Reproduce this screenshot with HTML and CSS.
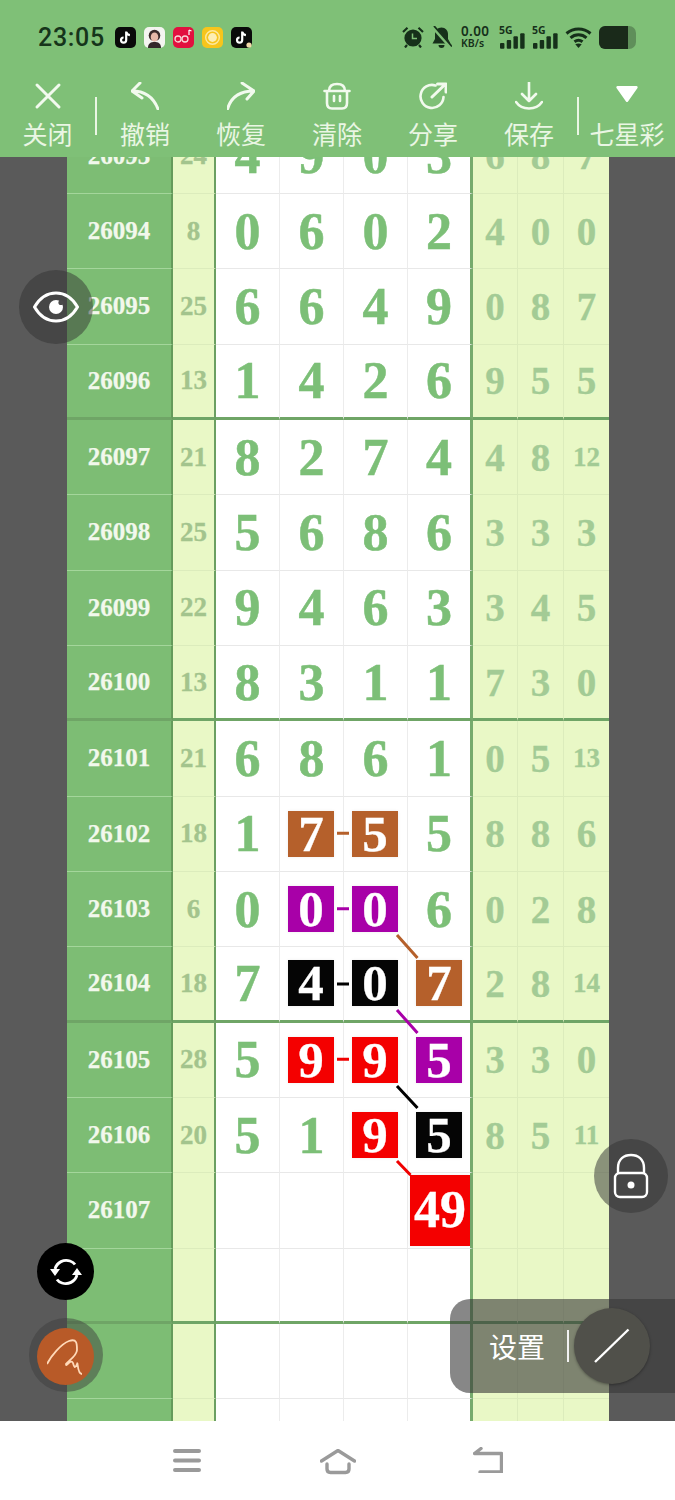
FILE: index.html
```html
<!DOCTYPE html>
<html lang="zh">
<head>
<meta charset="utf-8">
<title>七星彩</title>
<link rel="stylesheet" href="styles.css">
</head>
<body>
<div class="app">
  <header class="head">
    <div class="status">
      <div class="status-left">
        <span class="time">23:05</span>
        <svg class="app-icon" viewBox="0 0 21 21"><rect width="21" height="21" rx="5" fill="#0a0a0a"/><path d="M11.2 4.5v8.6a2.6 2.6 0 1 1-2.6-2.6M11.2 4.8c.4 2 1.7 3.2 3.7 3.4" fill="none" stroke="#fff" stroke-width="2.2"/></svg>
        <svg class="app-icon" viewBox="0 0 21 21"><rect width="21" height="21" rx="5" fill="#f4f4f0"/><path d="M4 21c0-5 3-6 6.500-6s6.500 1 6.500 6z" fill="#33282a"/><circle cx="10.500" cy="8.500" r="5.800" fill="#3b2a2a"/><ellipse cx="10.500" cy="10" rx="3.800" ry="4.600" fill="#e8b8a8"/></svg>
        <svg class="app-icon" viewBox="0 0 21 21"><rect width="21" height="21" rx="5" fill="#e2103f"/><rect x="2" y="9" width="6" height="6" rx="3" fill="none" stroke="#f8d8d8" stroke-width="1.300"/><rect x="9" y="9" width="6" height="6" rx="3" fill="none" stroke="#f8d8d8" stroke-width="1.300"/><path d="M16 3v5M16 3l2.500 1" stroke="#fff" stroke-width="1.200" fill="none"/></svg>
        <svg class="app-icon" viewBox="0 0 21 21"><rect width="21" height="21" rx="5" fill="#f7c51c"/><circle cx="10.500" cy="10.500" r="6.800" fill="none" stroke="#fde9a0" stroke-width="1.400"/><circle cx="10.500" cy="10.500" r="4.400" fill="#fdeeb4"/></svg>
        <svg class="app-icon" viewBox="0 0 21 21"><rect width="21" height="21" rx="5" fill="#0a0a0a"/><path d="M11.200 4.500v8.600a2.600 2.600 0 1 1-2.600-2.600M11.200 4.800c.4 2 1.700 3.200 3.700 3.400" fill="none" stroke="#fff" stroke-width="2.200"/><circle cx="18" cy="18" r="2.600" fill="#f2d9a8"/></svg>
      </div>
      <div class="status-right">
        <svg class="s-alarm" viewBox="0 0 22 22"><circle cx="11" cy="12" r="8.600" fill="#16301a"/><path d="M10.500 7.500V12.500H15" fill="none" stroke="#7fc077" stroke-width="1.500"/><path d="M1 6 5.500 1.800M21 6 16.500 1.800M5 19l-2 2.500M17 19l2 2.500" stroke="#16301a" stroke-width="2.200"/></svg>
        <svg class="s-bell" viewBox="0 0 21 22"><path d="M10.500 1.500c-4 0-6.500 3-6.500 6.500v5L1.500 17.500h18L17 13V8c0-3.500-2.500-6.500-6.500-6.500zM7.500 19a3 3 0 0 0 6 0z" fill="#16301a"/><path d="M1.500 .5 20 21.500" stroke="#7fc077" stroke-width="3.600"/><path d="M3 0 21 20.500" stroke="#16301a" stroke-width="1.800"/></svg>
        <div class="speed"><span class="speed-num">0.00</span><span class="speed-unit">KB/s</span></div>
        <div class="signal"><span class="five-g">5G</span>
          <svg class="bars" viewBox="0 0 26 16"><rect x="0" y="10" width="4.600" height="6" rx="1"/><rect x="7" y="7" width="4.600" height="9" rx="1"/><rect x="14" y="3" width="4.600" height="13" rx="1"/><rect x="21" y="0" width="4.600" height="16" rx="1"/></svg>
        </div>
        <div class="signal"><span class="five-g">5G</span>
          <svg class="bars" viewBox="0 0 26 16"><rect x="0" y="10" width="4.600" height="6" rx="1"/><rect x="7" y="7" width="4.600" height="9" rx="1"/><rect x="14" y="3" width="4.600" height="13" rx="1"/><rect x="21" y="0" width="4.600" height="16" rx="1"/></svg>
        </div>
        <svg class="s-wifi" viewBox="0 0 27 22"><path d="M1.500 7.500c7-6 17-6 24 0M5.500 11.800c4.600-4 11.400-4 16 0M9.500 15.800c2.400-1.900 5.600-1.900 8 0" fill="none" stroke="#16301a" stroke-width="3"/><path d="M13.500 22 10.300 18.300c1.800-1.100 4.600-1.100 6.400 0z" fill="#16301a"/></svg>
        <svg class="s-batt" viewBox="0 0 38 23"><rect x="0" y="0" width="37" height="23" rx="7" fill="#5f8f5a"/><path d="M6 0H29V23H6a6 6 0 0 1-6-6V6a6 6 0 0 1 6-6z" fill="#1a2a1a"/></svg>
      </div>
    </div>
    <nav class="toolbar">
      <div class="tool tool-first">
        <svg class="tool-icon" viewBox="0 0 28 28"><path d="M3 3 25 25M25 3 3 25" class="ti"/></svg>
        <span class="tool-label">关闭</span>
      </div>
      <span class="tool-sep"></span>
      <div class="tool">
        <svg class="tool-icon" viewBox="0 0 28 28"><path d="M9 1 1 9 11 16M1 9C12 9 22 14 27 27" class="ti"/></svg>
        <span class="tool-label">撤销</span>
      </div>
      <div class="tool">
        <svg class="tool-icon" viewBox="0 0 28 28"><path d="M15 1 27 9 20 17M.5 27C4 15 13 9 27 9" class="ti"/></svg>
        <span class="tool-label">恢复</span>
      </div>
      <div class="tool">
        <svg class="tool-icon" viewBox="0 0 28 28"><path d="M6 9C6 4 9 2 14 2s8 2 8 7M1.500 9H26.500M4 9V21c0 4 2 5.500 5 5.500h10c3 0 5-1.500 5-5.500V9M11 14v5M17 14v5" class="ti ti-thin"/></svg>
        <span class="tool-label">清除</span>
      </div>
      <div class="tool">
        <svg class="tool-icon" viewBox="0 0 28 28"><path d="M16.500 3.500A11.500 11.500 0 1 0 24.500 15" class="ti ti-thin"/><path d="M13 15 26 2.500M18.500 2H27V10" class="ti"/></svg>
        <span class="tool-label">分享</span>
      </div>
      <div class="tool">
        <svg class="tool-icon" viewBox="0 0 28 28"><path d="M14 0V19M7 12 14 19 21 12M1 20c3 4.500 8 6.500 13 6.500s10-2 13-6.500" class="ti ti-thin"/></svg>
        <span class="tool-label">保存</span>
      </div>
      <span class="tool-sep"></span>
      <div class="tool">
        <svg class="tool-icon" viewBox="0 0 28 28"><path d="M4.500 4h19c1 0 1.500 1 1 2L15 19.500c-.5.800-1.500.800-2 0L3.500 6c-.5-1 0-2 1-2z" fill="#fff"/></svg>
        <span class="tool-label">七星彩</span>
      </div>
    </nav>
  </header>

  <main class="stage">
    <div class="sheet">
      <div class="row"><div class="id">26093</div><div class="sum">24</div><div class="n">4</div><div class="n">9</div><div class="n">0</div><div class="n n4">3</div><div class="r">6</div><div class="r">8</div><div class="r">7</div></div>
      <div class="row"><div class="id">26094</div><div class="sum">8</div><div class="n">0</div><div class="n">6</div><div class="n">0</div><div class="n n4">2</div><div class="r">4</div><div class="r">0</div><div class="r">0</div></div>
      <div class="row"><div class="id">26095</div><div class="sum">25</div><div class="n">6</div><div class="n">6</div><div class="n">4</div><div class="n n4">9</div><div class="r">0</div><div class="r">8</div><div class="r">7</div></div>
      <div class="row end"><div class="id">26096</div><div class="sum">13</div><div class="n">1</div><div class="n">4</div><div class="n">2</div><div class="n n4">6</div><div class="r">9</div><div class="r">5</div><div class="r">5</div></div>
      <div class="row"><div class="id">26097</div><div class="sum">21</div><div class="n">8</div><div class="n">2</div><div class="n">7</div><div class="n n4">4</div><div class="r">4</div><div class="r">8</div><div class="r small">12</div></div>
      <div class="row"><div class="id">26098</div><div class="sum">25</div><div class="n">5</div><div class="n">6</div><div class="n">8</div><div class="n n4">6</div><div class="r">3</div><div class="r">3</div><div class="r">3</div></div>
      <div class="row"><div class="id">26099</div><div class="sum">22</div><div class="n">9</div><div class="n">4</div><div class="n">6</div><div class="n n4">3</div><div class="r">3</div><div class="r">4</div><div class="r">5</div></div>
      <div class="row end"><div class="id">26100</div><div class="sum">13</div><div class="n">8</div><div class="n">3</div><div class="n">1</div><div class="n n4">1</div><div class="r">7</div><div class="r">3</div><div class="r">0</div></div>
      <div class="row"><div class="id">26101</div><div class="sum">21</div><div class="n">6</div><div class="n">8</div><div class="n">6</div><div class="n n4">1</div><div class="r">0</div><div class="r">5</div><div class="r small">13</div></div>
      <div class="row"><div class="id">26102</div><div class="sum">18</div><div class="n">1</div><div class="n"><span class="box brown">7</span></div><div class="n"><span class="box brown">5</span></div><div class="n n4">5</div><div class="r">8</div><div class="r">8</div><div class="r">6</div></div>
      <div class="row"><div class="id">26103</div><div class="sum">6</div><div class="n">0</div><div class="n"><span class="box purple">0</span></div><div class="n"><span class="box purple">0</span></div><div class="n n4">6</div><div class="r">0</div><div class="r">2</div><div class="r">8</div></div>
      <div class="row end"><div class="id">26104</div><div class="sum">18</div><div class="n">7</div><div class="n"><span class="box black">4</span></div><div class="n"><span class="box black">0</span></div><div class="n n4"><span class="box brown">7</span></div><div class="r">2</div><div class="r">8</div><div class="r small">14</div></div>
      <div class="row"><div class="id">26105</div><div class="sum">28</div><div class="n">5</div><div class="n"><span class="box red">9</span></div><div class="n"><span class="box red">9</span></div><div class="n n4"><span class="box purple">5</span></div><div class="r">3</div><div class="r">3</div><div class="r">0</div></div>
      <div class="row"><div class="id">26106</div><div class="sum">20</div><div class="n">5</div><div class="n">1</div><div class="n"><span class="box red">9</span></div><div class="n n4"><span class="box black">5</span></div><div class="r">8</div><div class="r">5</div><div class="r small">11</div></div>
      <div class="row"><div class="id">26107</div><div class="sum"></div><div class="n"></div><div class="n"></div><div class="n"></div><div class="n n4"><span class="box red total">49</span></div><div class="r"></div><div class="r"></div><div class="r"></div></div>
      <div class="row end"><div class="id"></div><div class="sum"></div><div class="n"></div><div class="n"></div><div class="n"></div><div class="n n4"></div><div class="r"></div><div class="r"></div><div class="r"></div></div>
      <div class="row"><div class="id"></div><div class="sum"></div><div class="n"></div><div class="n"></div><div class="n"></div><div class="n n4"></div><div class="r"></div><div class="r"></div><div class="r"></div></div>
      <div class="row"><div class="id"></div><div class="sum"></div><div class="n"></div><div class="n"></div><div class="n"></div><div class="n n4"></div><div class="r"></div><div class="r"></div><div class="r"></div></div>
    </div>
  </main>

  <footer class="navbar">
    <svg class="nav-menu" viewBox="0 0 28 24"><path d="M2 3H26M2 12.500H26M2 22H26" class="nv"/></svg>
    <svg class="nav-home" viewBox="0 0 36 26"><path d="M1.500 12 18 1.500 34.500 12M7 15V20c0 2.500 1.500 3.500 3.500 3.500h15c2 0 3.500-1 3.500-3.500V15" class="nv nv-thin"/></svg>
    <svg class="nav-back" viewBox="0 0 30 26"><path d="M8 1.500 1.500 6.500H28.500V25H7" class="nv nv-thin"/></svg>
  </footer>

  <svg class="links" viewBox="0 0 675 1500">
    <path d="M337 833.300H349M397 935 417.500 958" stroke="#b5602b"/>
    <path d="M337 908.700H349M397 1010 417.500 1033" stroke="#a800a8"/>
    <path d="M337 984H349M397 1086 417.500 1108" stroke="#000"/>
    <path d="M337 1059.300H349M397 1161 410.500 1175" stroke="#f00000"/>
  </svg>

  <div class="float eye">
    <svg viewBox="0 0 46 32"><path d="M1.500 16C7 6.500 15 2 23 2s16 4.500 21.500 14C39 25.500 31 30 23 30S7 25.500 1.500 16z" fill="none" stroke="#fff" stroke-width="3"/><circle cx="23" cy="16" r="7" fill="#fff"/><circle cx="28" cy="11.500" r="2.600" fill="#4a4a4a"/></svg>
  </div>
  <div class="float lock">
    <svg viewBox="0 0 36 46"><path d="M5 20V15C5 6 11 2 18 2s13 4 13 13v5" fill="none" stroke="#fff" stroke-width="2.400"/><rect x="2" y="20" width="32" height="24" rx="5" fill="none" stroke="#fff" stroke-width="2.400"/><circle cx="18" cy="32" r="3.500" fill="#fff"/></svg>
  </div>
  <div class="float sync">
    <svg viewBox="0 0 32 32"><path d="M5 13C7 6 14 3 20 5c2 .7 4 2 5 3.500M27 19c-2 7-9 10-15 8-2-.7-4-2-5-3.500" fill="none" stroke="#fff" stroke-width="2.800"/><path d="M0 13H10L5 20zM32 19H22L27 12z" fill="#fff"/></svg>
  </div>
  <div class="float pen">
    <span class="pen-dot">
      <svg viewBox="0 0 36 40"><path d="M0 28C4 20 14 8 22 5 30 2 30 8 30 14 30 20 20 26 19 28 19 32 24 22 26 27 27 31 28 33 30 28 31 24 30 38 35 38" fill="none" stroke="#ffd9b8" stroke-width="1.800"/></svg>
    </span>
  </div>
  <div class="panel">
    <span class="panel-text">设置</span>
    <span class="panel-sep"></span>
    <span class="panel-btn">
      <svg viewBox="0 0 36 36"><path d="M1 34 34.500 1.500" stroke="#fff" stroke-width="2.400"/></svg>
    </span>
  </div>
</div>
</body>
</html>
```

FILE: styles.css
```css
* { box-sizing: border-box; }
html, body { margin: 0; padding: 0; }
body { width: 675px; height: 1500px; overflow: hidden; background: #fff; }

.app {
  position: relative;
  width: 675px;
  height: 1500px;
  display: flex;
  flex-direction: column;
  overflow: hidden;
  font-family: "Noto Sans CJK SC", "Noto Sans", sans-serif;
}

/* header */
.head { background: #7fc077; height: 157px; flex: none; position: relative; z-index: 2; }
.status {
  height: 74px;
  display: flex;
  align-items: center;
  justify-content: space-between;
  padding: 0 38px;
  color: #16301a;
}
.status-left, .status-right { display: flex; align-items: center; }
.status-left { gap: 8px; }
.status-right { gap: 7px; }
.time {
  font-family: Roboto, sans-serif;
  font-size: 25px;
  font-weight: 500;
  letter-spacing: .7px;
  width: 69px;
  color: #16351b;
}
.app-icon { width: 21px; height: 21px; }
.s-alarm { width: 22px; height: 22px; }
.s-bell { width: 21px; height: 22px; }
.speed {
  width: 33px;
  padding-left: 2px;
  display: flex;
  flex-direction: column;
  font-family: "Noto Sans", sans-serif;
  font-weight: 600;
  line-height: 12px;
}
.speed-num { font-size: 13.500px; letter-spacing: .4px; }
.speed-unit { font-size: 10.500px; }
.signal { width: 26px; height: 23px; position: relative; }
.five-g {
  position: absolute;
  left: 0;
  top: -1px;
  font-family: "Noto Sans", sans-serif;
  font-size: 10.500px;
  font-weight: 700;
  line-height: 11px;
}
.bars { position: absolute; left: 1px; bottom: 0; width: 25px; height: 16px; fill: #16301a; }
.s-wifi { width: 27px; height: 22px; }
.s-batt { width: 38px; height: 23px; }

.toolbar { display: flex; height: 83px; align-items: flex-start; }
.tool {
  width: 96px;
  flex: none;
  display: flex;
  flex-direction: column;
  align-items: center;
  padding-top: 8px;
}
.tool-first { width: 95px; }
.tool-icon { width: 28px; height: 28px; display: block; }
.ti { fill: none; stroke: #f2faee; stroke-width: 3; stroke-linecap: round; stroke-linejoin: round; }
.ti-thin { stroke-width: 2.600; }
.tool-label {
  margin-top: 7px;
  font-size: 25px;
  line-height: 32px;
  color: #eaf6e4;
  white-space: nowrap;
}
.tool-sep { width: 2px; height: 38px; margin-top: 23px; flex: none; background: #eaf6e4; }

/* table */
.stage { height: 1264px; flex: none; overflow: hidden; background: #5a5a5a; }
.sheet { margin: -38.400px 0 0 67px; width: 542px; font-family: "Liberation Serif", serif; font-weight: 700; }
.row {
  display: grid;
  grid-template-columns: 106px 43px 64px 64px 64px 65px 45px 46px 45px;
  height: 75.330px;
}
.row > div {
  display: flex;
  align-items: center;
  justify-content: center;
  border-bottom: 1px solid transparent;
  min-width: 0;
}
.id {
  background: #7dbd74;
  color: #f2f8ec;
  font-size: 25px;
  -webkit-text-stroke: .25px #f2f8ec;
  border-right: 2px solid #659b5b;
  border-bottom-color: #a4d69b !important;
}
.sum {
  background: #e9f8c6;
  color: #a3c48d;
  font-size: 27px;
  -webkit-text-stroke: .3px #a3c48d;
  border-right: 2px solid #6b9f62;
  border-bottom-color: #dcecbc !important;
}
.n {
  background: #fff;
  color: #7cbf77;
  font-size: 52px;
  -webkit-text-stroke: .5px #7cbf77;
  border-right: 1px solid #ececec;
  border-bottom-color: #e8e8e8 !important;
}
.n4 { border-right: 3px solid #76ab6d; }
.r {
  background: #e9f8c6;
  color: #a3cb95;
  font-size: 39px;
  -webkit-text-stroke: .3px #a3cb95;
  border-right: 1px solid #dcecbc;
  border-bottom-color: #dcecbc !important;
}
.small { font-size: 27px; }
.row > .r:last-child { border-right: 0; }
.row.end > div { border-bottom: 3px solid #6fa566 !important; }

.box {
  width: 46px;
  height: 46px;
  margin-right: 1px;
  display: flex;
  align-items: center;
  justify-content: center;
  color: #fff;
  font-size: 51px;
  line-height: 46px;
  -webkit-text-stroke: .3px #fff;
  box-shadow: 0 0 3px rgba(0, 0, 0, .08);
}
.n4 .box { margin-right: 0; }
.brown { background: #b5602b; }
.purple { background: #a800a8; }
.black { background: #050505; }
.red { background: #f40000; }
.n4 .total { width: 60px; height: 71px; font-size: 52px; margin-left: 2px; }

/* bottom bar */
.navbar { height: 79px; flex: none; background: #fff; position: relative; z-index: 2; display: flex; align-items: flex-start; }
.nv { fill: none; stroke: #9a9a9a; stroke-width: 4; stroke-linecap: round; stroke-linejoin: round; }
.nv-thin { stroke-width: 3.400; }
.nav-menu { width: 28px; height: 24px; margin: 26.500px 0 0 173px; }
.nav-home { width: 36px; height: 26px; margin: 28px 0 0 119px; }
.nav-back { width: 30px; height: 26px; margin: 26px 0 0 117px; }

/* overlays */
.links { position: absolute; left: 0; top: 0; width: 675px; height: 1500px; fill: none; stroke-width: 3; pointer-events: none; }
.float { position: absolute; border-radius: 50%; display: flex; align-items: center; justify-content: center; }
.eye { left: 19px; top: 270px; width: 74px; height: 74px; background: rgba(48, 48, 48, .48); z-index: 3; }
.eye svg { width: 46px; height: 32px; }
.lock { left: 594px; top: 1139px; width: 74px; height: 74px; background: rgba(52, 52, 52, .52); z-index: 3; }
.lock svg { width: 36px; height: 46px; }
.sync { left: 37px; top: 1243px; width: 57px; height: 57px; background: #000; z-index: 3; }
.sync svg { width: 32px; height: 32px; }
.pen { left: 29px; top: 1318px; width: 74px; height: 74px; background: rgba(60, 60, 60, .48); z-index: 3; }
.pen-dot { width: 57px; height: 57px; border-radius: 50%; background: #b85a28; display: flex; align-items: center; justify-content: center; margin-top: 2px; margin-left: -2px; }
.pen-dot svg { width: 36px; height: 40px; }
.panel {
  position: absolute;
  left: 450px;
  top: 1299px;
  width: 225px;
  height: 94px;
  border-radius: 20px 0 0 20px;
  background: rgba(55, 55, 55, .6);
  display: flex;
  align-items: center;
  padding-left: 39px;
  z-index: 3;
}
.panel-text { color: #fff; font-size: 28px; line-height: 40px; width: 58px; white-space: nowrap; }
.panel-sep { width: 2px; height: 32px; margin-left: 20px; background: #f2f2f2; }
.panel-btn {
  width: 76px;
  height: 76px;
  margin-left: 5px;
  border-radius: 50%;
  background: #50504a;
  box-shadow: 0 1px 3px rgba(0, 0, 0, .35);
  display: flex;
  align-items: center;
  justify-content: center;
}
.panel-btn svg { width: 36px; height: 36px; }
```
